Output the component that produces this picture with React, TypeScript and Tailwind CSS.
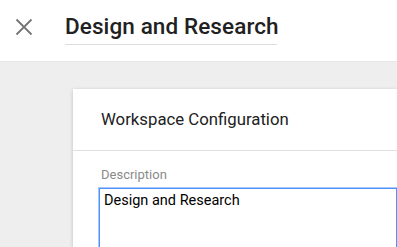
export default function App() {
  return (
    <div
      className="w-[397px] h-[247px] overflow-hidden bg-[#eeeeee] flex flex-col"
      style={{ fontFamily: "Roboto, 'Liberation Sans', sans-serif" }}
    >
      <header className="h-[62px] shrink-0 bg-white flex items-start border-b border-[#e6e6e6]">
        <button className="mt-[18px] ml-[15px] text-[#757575]">
          <svg width="18" height="18" viewBox="0 0 18 18" fill="none" stroke="currentColor" strokeWidth="1.8">
            <path d="M1.5 1.5l15 15M16.5 1.5l-15 15" />
          </svg>
        </button>
        <div className="ml-[32px] mt-[12px] w-[212px] border-b border-[#dddddd] pb-[4px]">
          <h1 className="whitespace-nowrap text-[22.5px] leading-[28px] font-medium text-[#212121] tracking-[0.1px]">
            Design and Research
          </h1>
        </div>
      </header>
      <main className="flex-1 pl-[73px] pt-[27px]">
        <section className="bg-white h-full shadow-[0_1px_4px_rgba(0,0,0,0.2)]">
          <div className="h-[62px] border-b border-[#e0e0e0] flex items-center pl-[28px]">
            <h2 className="text-[16.75px] text-[#212121]">Workspace Configuration</h2>
          </div>
          <div className="pl-[26px] pt-[16px]">
            <label className="block text-[13px] leading-[16px] text-[#8a8a8a] ml-[2px]">
              Description
            </label>
            <textarea
              className="mt-[5px] w-full h-[80px] border border-[#4d90fe] outline outline-1 outline-[#a8c7fa] px-[4px] py-[3px] text-[14.5px] leading-[18px] text-black resize-none"
              defaultValue="Design and Research"
            />
          </div>
        </section>
      </main>
    </div>
  );
}
